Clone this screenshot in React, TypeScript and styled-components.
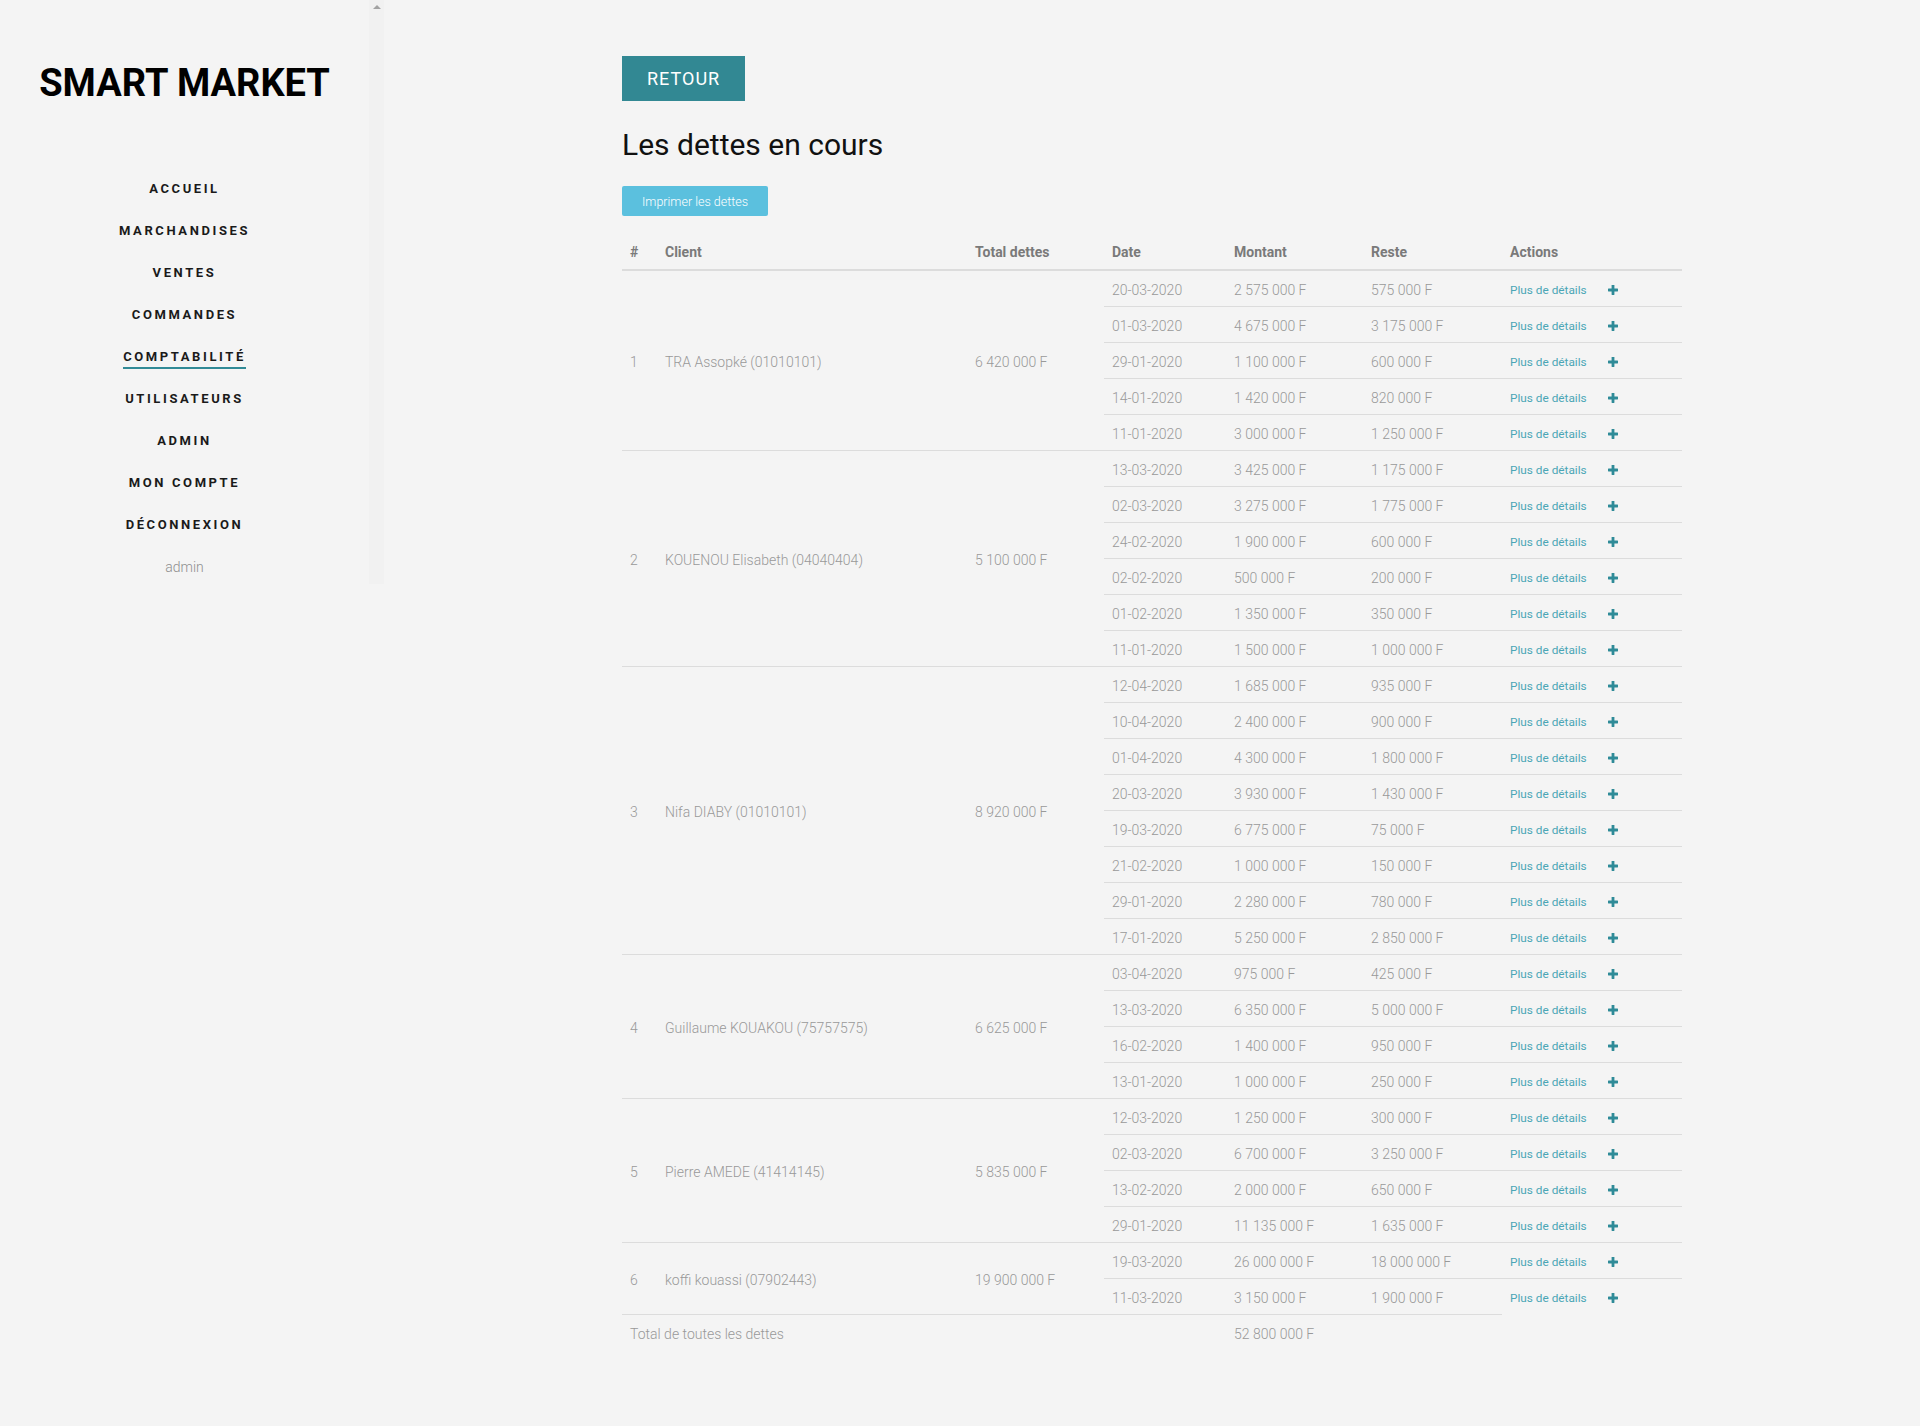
import React from "react";
import styled, { createGlobalStyle } from "styled-components";

const GlobalStyle = createGlobalStyle`
  html, body { margin: 0; padding: 0; background: #f4f4f4; }
  body { font-family: Roboto, "Liberation Sans", Arial, sans-serif; color: #111; }
  * { box-sizing: border-box; }
`;

type Debt = { date: string; montant: string; reste: string };
type Group = { client: string; total: string; debts: Debt[] };

const d = (date: string, montant: string, reste: string): Debt => ({ date, montant, reste });

const groups: Group[] = [
  {
    client: "TRA Assopké (01010101)",
    total: "6 420 000 F",
    debts: [
      d("20-03-2020", "2 575 000 F", "575 000 F"),
      d("01-03-2020", "4 675 000 F", "3 175 000 F"),
      d("29-01-2020", "1 100 000 F", "600 000 F"),
      d("14-01-2020", "1 420 000 F", "820 000 F"),
      d("11-01-2020", "3 000 000 F", "1 250 000 F"),
    ],
  },
  {
    client: "KOUENOU Elisabeth (04040404)",
    total: "5 100 000 F",
    debts: [
      d("13-03-2020", "3 425 000 F", "1 175 000 F"),
      d("02-03-2020", "3 275 000 F", "1 775 000 F"),
      d("24-02-2020", "1 900 000 F", "600 000 F"),
      d("02-02-2020", "500 000 F", "200 000 F"),
      d("01-02-2020", "1 350 000 F", "350 000 F"),
      d("11-01-2020", "1 500 000 F", "1 000 000 F"),
    ],
  },
  {
    client: "Nifa DIABY (01010101)",
    total: "8 920 000 F",
    debts: [
      d("12-04-2020", "1 685 000 F", "935 000 F"),
      d("10-04-2020", "2 400 000 F", "900 000 F"),
      d("01-04-2020", "4 300 000 F", "1 800 000 F"),
      d("20-03-2020", "3 930 000 F", "1 430 000 F"),
      d("19-03-2020", "6 775 000 F", "75 000 F"),
      d("21-02-2020", "1 000 000 F", "150 000 F"),
      d("29-01-2020", "2 280 000 F", "780 000 F"),
      d("17-01-2020", "5 250 000 F", "2 850 000 F"),
    ],
  },
  {
    client: "Guillaume KOUAKOU (75757575)",
    total: "6 625 000 F",
    debts: [
      d("03-04-2020", "975 000 F", "425 000 F"),
      d("13-03-2020", "6 350 000 F", "5 000 000 F"),
      d("16-02-2020", "1 400 000 F", "950 000 F"),
      d("13-01-2020", "1 000 000 F", "250 000 F"),
    ],
  },
  {
    client: "Pierre AMEDE (41414145)",
    total: "5 835 000 F",
    debts: [
      d("12-03-2020", "1 250 000 F", "300 000 F"),
      d("02-03-2020", "6 700 000 F", "3 250 000 F"),
      d("13-02-2020", "2 000 000 F", "650 000 F"),
      d("29-01-2020", "11 135 000 F", "1 635 000 F"),
    ],
  },
  {
    client: "koffi kouassi (07902443)",
    total: "19 900 000 F",
    debts: [
      d("19-03-2020", "26 000 000 F", "18 000 000 F"),
      d("11-03-2020", "3 150 000 F", "1 900 000 F"),
    ],
  },
];

const navItems = [
  "ACCUEIL",
  "MARCHANDISES",
  "VENTES",
  "COMMANDES",
  "COMPTABILITÉ",
  "UTILISATEURS",
  "ADMIN",
  "MON COMPTE",
  "DÉCONNEXION",
];

/* ---------- layout ---------- */

const Page = styled.div`
  display: flex;
  align-items: flex-start;
  min-height: 1426px;
`;

const Sidebar = styled.aside`
  display: flex;
  flex: 0 0 384px;
  height: 584px;
`;

const SideNav = styled.nav`
  width: 369px;
  display: flex;
  flex-direction: column;
  align-items: center;
  padding-top: 59px;
`;

const ScrollTrack = styled.div`
  width: 15px;
  height: 100%;
  background: #f1f1f1;
  display: flex;
  justify-content: center;
  padding-top: 5px;
`;

const ScrollArrow = styled.div`
  width: 0;
  height: 0;
  border-left: 4px solid transparent;
  border-right: 4px solid transparent;
  border-bottom: 4px solid #a3a3a3;
`;

const Brand = styled.h1`
  margin: 0 0 61px;
  font-size: 38px;
  line-height: 48px;
  font-weight: 700;
  color: #000;
  letter-spacing: 0;
`;

const NavList = styled.ul`
  list-style: none;
  margin: 0;
  padding: 0;
  display: flex;
  flex-direction: column;
  align-items: center;
`;

const NavItem = styled.li`
  height: 42px;
  line-height: 42px;
  font-size: 13px;
  font-weight: 700;
  letter-spacing: 2.6px;
  color: #1a1a1a;
  text-align: center;
`;

const NavLabel = styled.span<{ $active?: boolean }>`
  display: inline-block;
  line-height: 16px;
  padding-bottom: 2px;
  border-bottom: 2px solid ${(p) => (p.$active ? "#318a96" : "transparent")};
`;

const UserName = styled.div`
  height: 42px;
  line-height: 42px;
  font-size: 14px;
  font-weight: 300;
  color: #8f8f8f;
`;

const Main = styled.main`
  flex: 1;
  display: flex;
  justify-content: center;
  padding-top: 56px;
`;

const Content = styled.div`
  width: 1060px;
  display: flex;
  flex-direction: column;
  align-items: flex-start;
`;

const BackButton = styled.button`
  height: 45px;
  padding: 0 25px;
  border: none;
  border-radius: 0;
  background: #328893;
  color: #fff;
  font-family: inherit;
  font-size: 18px;
  font-weight: 400;
  letter-spacing: 1px;
  cursor: pointer;
`;

const Title = styled.h2`
  margin: 26px 0 23px;
  font-size: 30px;
  line-height: 36px;
  font-weight: 400;
  color: #111;
`;

const PrintButton = styled.button`
  height: 30px;
  padding: 0 20px;
  border: none;
  border-radius: 2px;
  background: #5bc0de;
  color: #fff;
  font-family: inherit;
  font-size: 12.5px;
  font-weight: 300;
  cursor: pointer;
`;

const Table = styled.table`
  margin-top: 17px;
  width: 1060px;
  border-collapse: collapse;
  table-layout: fixed;
  font-size: 14px;
`;

const Th = styled.th`
  text-align: left;
  padding: 8px 8px 6px;
  line-height: 22px;
  font-weight: 700;
  color: #7a7a7a;
  border-bottom: 2px solid #dcdcdc;
`;

const Td = styled.td`
  padding: 9px 8px 5px;
  line-height: 21px;
  font-weight: 300;
  color: #999;
  border-top: 1px solid #dcdcdc;
  vertical-align: middle;
  white-space: nowrap;
`;

const ActionCell = styled.div`
  display: flex;
  align-items: center;
  gap: 21px;
`;

const DetailLink = styled.a`
  font-size: 11.8px;
  font-weight: 400;
  color: #4ba6b6;
  text-decoration: none;
  cursor: pointer;
`;

const PlusButton = styled.span`
  display: inline-flex;
  width: 10px;
  height: 10px;
  margin-top: -2px;
  color: #2f8b98;
`;

const PlusIcon = () => (
  <svg width="10" height="10" viewBox="0 0 10 10" fill="currentColor">
    <rect x="3.6" y="0" width="2.8" height="10" rx="0.4" />
    <rect x="0" y="3.6" width="10" height="2.8" rx="0.4" />
  </svg>
);

export default function App() {
  return (
    <>
      <GlobalStyle />
      <Page>
        <Sidebar>
          <SideNav>
            <Brand>SMART MARKET</Brand>
            <NavList>
              {navItems.map((item) => (
                <NavItem key={item}>
                  <NavLabel $active={item === "COMPTABILITÉ"}>{item}</NavLabel>
                </NavItem>
              ))}
            </NavList>
            <UserName>admin</UserName>
          </SideNav>
          <ScrollTrack>
            <ScrollArrow />
          </ScrollTrack>
        </Sidebar>
        <Main>
          <Content>
            <BackButton>RETOUR</BackButton>
            <Title>Les dettes en cours</Title>
            <PrintButton>Imprimer les dettes</PrintButton>
            <Table>
              <colgroup>
                <col style={{ width: 35 }} />
                <col style={{ width: 310 }} />
                <col style={{ width: 137 }} />
                <col style={{ width: 122 }} />
                <col style={{ width: 137 }} />
                <col style={{ width: 139 }} />
                <col style={{ width: 180 }} />
              </colgroup>
              <thead>
                <tr>
                  <Th>#</Th>
                  <Th>Client</Th>
                  <Th>Total dettes</Th>
                  <Th>Date</Th>
                  <Th>Montant</Th>
                  <Th>Reste</Th>
                  <Th>Actions</Th>
                </tr>
              </thead>
              <tbody>
                {groups.map((g, gi) =>
                  g.debts.map((debt, di) => (
                    <tr key={`${gi}-${di}`}>
                      {di === 0 && (
                        <>
                          <Td rowSpan={g.debts.length}>{gi + 1}</Td>
                          <Td rowSpan={g.debts.length}>{g.client}</Td>
                          <Td rowSpan={g.debts.length}>{g.total}</Td>
                        </>
                      )}
                      <Td>{debt.date}</Td>
                      <Td>{debt.montant}</Td>
                      <Td>{debt.reste}</Td>
                      <Td>
                        <ActionCell>
                          <DetailLink>Plus de détails</DetailLink>
                          <PlusButton>
                            <PlusIcon />
                          </PlusButton>
                        </ActionCell>
                      </Td>
                    </tr>
                  ))
                )}
                <tr>
                  <Td colSpan={4}>Total de toutes les dettes</Td>
                  <Td>52 800 000 F</Td>
                  <Td />
                </tr>
              </tbody>
            </Table>
          </Content>
        </Main>
      </Page>
    </>
  );
}
